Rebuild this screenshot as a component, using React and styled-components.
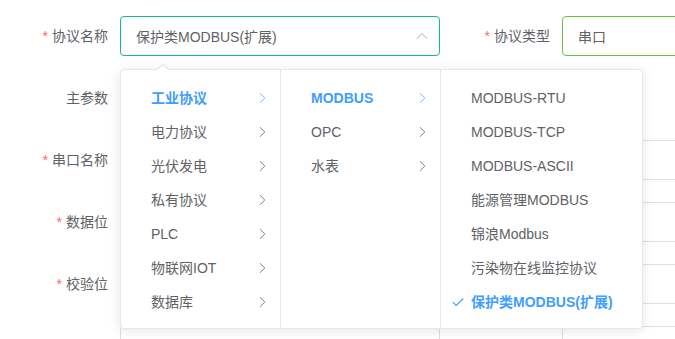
import React from "react";
import styled, { createGlobalStyle } from "styled-components";

const Global = createGlobalStyle`
  html, body { margin: 0; padding: 0; background: #fff; }
  body {
    font-family: "Liberation Sans", Arial, "Noto Sans CJK SC", sans-serif;
    font-size: 14px;
    color: #606266;
  }
  * { box-sizing: border-box; }
`;

const Form = styled.div`
  display: grid;
  grid-template-columns: 440px 1fr;
  column-gap: 2px;
  row-gap: 22px;
  padding-top: 16px;
  width: 675px;
  height: 339px;
  overflow: hidden;
`;

const Item = styled.div`
  display: flex;
  align-items: center;
  height: 40px;
  position: relative;
`;

const Label = styled.label`
  width: 120px;
  flex: none;
  padding-right: 12px;
  text-align: right;
  line-height: 40px;
  color: #606266;
  white-space: nowrap;
  &::before {
    content: ${(p) => (p.$required ? '"*"' : "none")};
    color: #f56c6c;
    margin-right: 4px;
  }
`;

const Box = styled.div`
  position: relative;
  width: 320px;
  height: 40px;
  flex: none;
  border: 1px solid ${(p) => p.$border || "#dcdfe6"};
  border-radius: 4px;
  padding: 0 15px;
  display: flex;
  align-items: center;
  color: #606266;
  background: #fff;
`;

const Suffix = styled.span`
  position: absolute;
  right: 11px;
  top: 50%;
  transform: translateY(-50%);
  display: flex;
`;

const Dropdown = styled.div`
  position: absolute;
  top: 52px;
  left: -1px;
  z-index: 10;
  display: flex;
  background: #fff;
  border: 1px solid #e4e7ed;
  border-radius: 4px;
  box-shadow: 0 2px 12px 0 rgba(0, 0, 0, 0.1);
  &::before {
    content: "";
    position: absolute;
    top: -13px;
    left: 36px;
    border: 6px solid transparent;
    border-bottom-color: #e4e7ed;
  }
  &::after {
    content: "";
    position: absolute;
    top: -11px;
    left: 36px;
    border: 6px solid transparent;
    border-bottom-color: #fff;
  }
`;

const Menu = styled.ul`
  list-style: none;
  margin: 0;
  padding: 11px 0 9px;
  width: ${(p) => p.$w}px;
  border-right: ${(p) => (p.$last ? "none" : "1px solid #e4e7ed")};
`;

const Node = styled.li`
  position: relative;
  height: 34px;
  line-height: 34px;
  padding: 0 30px 0 30px;
  display: flex;
  align-items: center;
  color: ${(p) => (p.$active ? "#409eff" : "#606266")};
  font-weight: ${(p) => (p.$active ? 700 : 400)};
  white-space: nowrap;
`;

const NodeArrow = styled.span`
  position: absolute;
  right: 14px;
  top: 50%;
  transform: translateY(-50%);
  display: flex;
`;

const Check = styled.span`
  position: absolute;
  left: 11px;
  top: 50%;
  transform: translateY(-50%);
  display: flex;
`;

const ChevronRight = ({ color }) => (
  <svg width="7" height="11" viewBox="0 0 7 11">
    <path d="M1 0.8 L5.8 5.5 L1 10.2" fill="none" stroke={color} strokeWidth="1" />
  </svg>
);

const ChevronUp = () => (
  <svg width="12" height="7" viewBox="0 0 12 7">
    <path d="M0.8 6.2 L6 1.2 L11.2 6.2" fill="none" stroke="#c0c4cc" strokeWidth="1.1" />
  </svg>
);

const CheckIcon = () => (
  <svg width="12" height="9" viewBox="0 0 12 9">
    <path d="M0.8 4.6 L4.2 8 L11.2 1" fill="none" stroke="#409eff" strokeWidth="1.1" />
  </svg>
);

const col1 = ["工业协议", "电力协议", "光伏发电", "私有协议", "PLC", "物联网IOT", "数据库"];
const col2 = ["MODBUS", "OPC", "水表"];
const col3 = [
  "MODBUS-RTU",
  "MODBUS-TCP",
  "MODBUS-ASCII",
  "能源管理MODBUS",
  "锦浪Modbus",
  "污染物在线监控协议",
  "保护类MODBUS(扩展)",
];

export default function App() {
  return (
    <>
      <Global />
      <Form>
        <Item>
          <Label $required>协议名称</Label>
          <Box $border="#1ab394">
            保护类MODBUS(扩展)
            <Suffix>
              <ChevronUp />
            </Suffix>
            <Dropdown>
              <Menu $w={160}>
                {col1.map((t, i) => (
                  <Node key={t} $active={i === 0}>
                    {t}
                    <NodeArrow>
                      <ChevronRight color={i === 0 ? "#79b4f5" : "#7a7c85"} />
                    </NodeArrow>
                  </Node>
                ))}
              </Menu>
              <Menu $w={160}>
                {col2.map((t, i) => (
                  <Node key={t} $active={i === 0}>
                    {t}
                    <NodeArrow>
                      <ChevronRight color={i === 0 ? "#79b4f5" : "#7a7c85"} />
                    </NodeArrow>
                  </Node>
                ))}
              </Menu>
              <Menu $w={201} $last>
                {col3.map((t, i) => (
                  <Node key={t} $active={i === col3.length - 1}>
                    {i === col3.length - 1 && (
                      <Check>
                        <CheckIcon />
                      </Check>
                    )}
                    {t}
                  </Node>
                ))}
              </Menu>
            </Dropdown>
          </Box>
        </Item>
        <Item>
          <Label $required>协议类型</Label>
          <Box $border="#67c23a">串口</Box>
        </Item>

        <Item>
          <Label>主参数</Label>
        </Item>
        <Item />

        <Item>
          <Label $required>串口名称</Label>
          <Box />
        </Item>
        <Item>
          <Label />
          <Box />
        </Item>

        <Item>
          <Label $required>数据位</Label>
          <Box />
        </Item>
        <Item>
          <Label />
          <Box />
        </Item>

        <Item>
          <Label $required>校验位</Label>
          <Box />
        </Item>
        <Item>
          <Label />
          <Box />
        </Item>

        <Item>
          <Label />
          <Box />
        </Item>
        <Item>
          <Label />
          <Box />
        </Item>
      </Form>
    </>
  );
}
